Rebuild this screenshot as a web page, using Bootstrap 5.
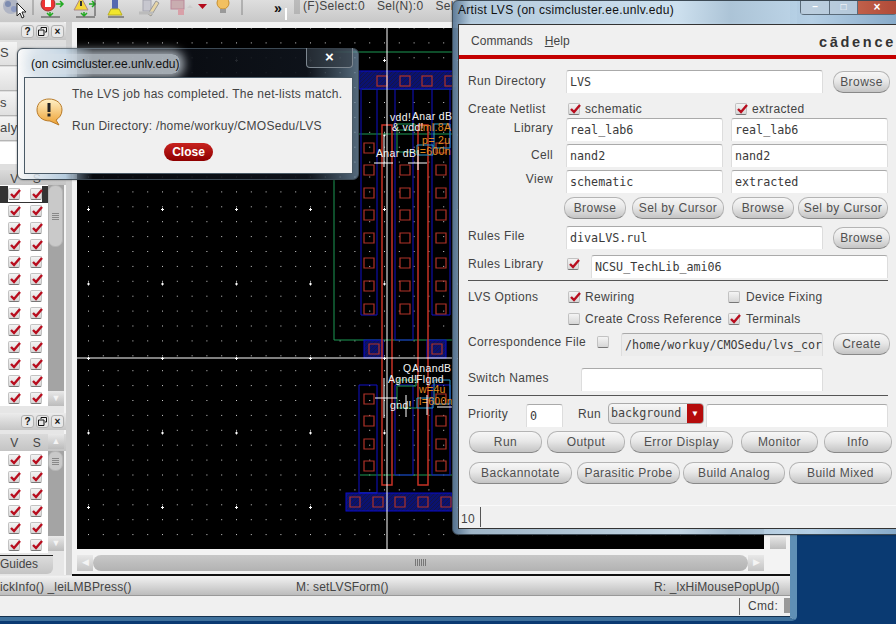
<!DOCTYPE html>
<html lang="en">
<head>
<meta charset="UTF-8">
<title>Artist LVS</title>
<link rel="stylesheet" href="https://cdn.jsdelivr.net/npm/bootstrap@5.3.0/dist/css/bootstrap.min.css">
<style>
html, body { margin: 0; height: 624px; overflow: hidden; }
body { background: #0a3a72; font-family: "Liberation Sans", Arial, sans-serif; font-size: 12px; color: #444; letter-spacing: .35px; }
.desk { position: relative; width: 896px; height: 624px; overflow: hidden; }

/* big layout window */
.main-win { position: absolute; left: 0; top: 0; z-index: 0; width: 797px; height: 621px; background: #e9e9e9; border-right: 7px solid #5f8fb5; border-bottom: 4px solid #3f719c; border-bottom-right-radius: 5px; }
.tool-strip { height: 22px; background: linear-gradient(#dedede, #c8c8c8); position: relative; overflow: hidden; z-index: 1; }
.tool-more { position: absolute; left: 274px; top: -2px; font-size: 14px; font-weight: 700; color: #111; }
.sel-text { position: absolute; left: 303px; top: -3px; font-size: 12px; letter-spacing: .3px; display: flex; gap: 12px; white-space: nowrap; }
.work { position: absolute; left: 0; top: 20px; width: 790px; height: 555px; background: linear-gradient(90deg, #e6e6e6 64px, #f4f4f4 64px 66px, #cfcfcf 66px 72px, #f3f3f3 72px); }
.dock-col { position: absolute; left: 0; top: 0; width: 66px; }
.dock-head { height: 17px; background: linear-gradient(#ececec, #c6c6c6); display: flex; justify-content: flex-end; gap: 2px; padding: 2px 2px 0 0; }
.dock-btn { width: 13px; height: 13px; background: #e8e8e8; border: 1px solid #b0b0b0; border-radius: 3px; font-size: 10px; line-height: 11px; text-align: center; font-weight: 700; color: #111; letter-spacing: 0; }
.dock-btn svg { display: block; margin: 1px 0 0 1px; }
.gap-3px { height: 3px; }
.gap-4px { height: 4px; }
.gap-7px { height: 7px; }
.side-stack { height: 130px; position: relative; background: #dfdfdf; }
.side-tab { position: absolute; left: 0; width: 17px; height: 24px; background: linear-gradient(#f4f4f4, #e0e0e0); border-bottom: 1px solid #b5b5b5; font-size: 13px; line-height: 22px; overflow: hidden; white-space: nowrap; text-align: right; }
.tab-1 { top: 2px; padding-right: 9px; }
.tab-2 { top: 27px; }
.tab-3 { top: 52px; padding-right: 13px; }
.tab-4 { top: 77px; padding-right: 6px; }
.side-blank { position: absolute; left: 0; top: 102px; width: 17px; height: 22px; background: #fff; }
.col-heads { height: 15px; background: linear-gradient(#dadada, #c4c4c4); }
.col-heads-tall { height: 17px; }
.head-vs { width: 48px; display: flex; justify-content: flex-end; gap: 14px; padding-right: 7px; }
.chk-rows { width: 48px; background: #fff; display: flex; flex-direction: column; align-items: flex-end; padding-right: 6px; }
.chk-pair { height: 17px; display: flex; gap: 10px; align-items: center; }
#list1 .chk-pair:first-child { box-shadow: -8px 1px 0 #333, 6px 1px 0 #333; }
.v-track { width: 16px; background: #a4a4a4; display: flex; flex-direction: column; justify-content: space-between; }
.track-long { height: 221px; }
.track-short { height: 100px; }
.thumb-v { background: #c9c9c9; border: 1px solid #b5b5b5; border-radius: 7px; width: 15px; display: flex; align-items: center; justify-content: center; }
.thumb-v i { display: block; width: 7px; height: 7px; background: repeating-linear-gradient(#888 0 1px, transparent 1px 2px); }
.thumb-long { height: 62px; }
.thumb-short { height: 20px; }
.sb-arrow { height: 15px; width: 16px; background: linear-gradient(#e9e9e9, #bcbcbc); color: #f4f4f4; text-align: center; font-size: 9px; line-height: 15px; letter-spacing: 0; }
.guides-tab { position: absolute; left: 0; top: 535px; width: 53px; height: 19px; background: linear-gradient(#dcdcdc, #c4c4c4); border-top: 1px solid #222; border-radius: 0 0 6px 0; font-size: 12px; line-height: 16px; letter-spacing: 0; }

.canvas-box { position: absolute; left: 77px; top: 28px; width: 687px; height: 521px; background: #000; }
.canvas-box svg { display: block; }
.corner-btn { position: absolute; left: 770px; top: 537px; width: 16px; height: 12px; background: linear-gradient(#e4e4e4, #bdbdbd); }
.h-scroll { position: absolute; left: 77px; top: 555px; width: 687px; height: 16px; display: flex; }
.h-btn { width: 16px; background: linear-gradient(#e8e8e8, #c4c4c4); color: #f4f4f4; text-align: center; font-size: 9px; line-height: 15px; letter-spacing: 0; }
.h-thumb { flex: 1; background: linear-gradient(#c8c8c8, #b2b2b2); border-radius: 8px; position: relative; }
.h-grip { position: absolute; left: 322px; top: 4px; width: 11px; height: 7px; background: repeating-linear-gradient(90deg, #777 0 1px, transparent 1px 2px); }
.black-rule { position: absolute; left: 72px; top: 574px; width: 718px; height: 2px; background: #111; }
.status-a { position: absolute; left: 0; top: 576px; width: 790px; height: 20px; background: linear-gradient(#f3f3f3, #bcbcbc); border-bottom: 1px solid #999; letter-spacing: .15px; }
.status-a span { position: absolute; top: 2px; white-space: nowrap; }
.st-l { left: 0; }
.st-m { left: 296px; }
.st-r { left: 654px; }
.status-b { position: absolute; left: 0; top: 596px; width: 790px; height: 21px; background: #f0f0f0; display: flex; align-items: center; justify-content: flex-end; border-bottom: 1px solid #14304e; }
.cmd-cell { width: 51px; height: 17px; border-left: 1px solid #666; padding-left: 8px; line-height: 16px; display: flex; justify-content: space-between; }
.cmd-cell i { display: block; width: 6px; height: 15px; background: #999; }

/* glass windows */
.glass { position: absolute; background: linear-gradient(90deg, rgba(255,255,255,.85), rgba(170,200,225,.75) 14%, rgba(8,10,15,.88) 22%, rgba(15,20,28,.92) 85%, rgba(120,150,175,.7)); border: 1px solid #3d4a55; border-radius: 6px; box-shadow: 0 0 2px rgba(0,0,0,.5); }
.msg-box { left: 17px; top: 48px; width: 342px; height: 132px; }
.msg-title { position: absolute; left: 13px; top: 5px; height: 20px; line-height: 20px; color: #111; letter-spacing: 0; background: rgba(215,224,232,.75); box-shadow: 0 0 10px 4px rgba(215,224,232,.75); border-radius: 8px; }
.msg-close { position: absolute; right: 5px; top: -1px; width: 47px; height: 20px; border: 1px solid #7d8790; border-top: 0; border-radius: 0 0 4px 4px; background: rgba(50,58,66,.6); color: #fff; text-align: center; font-weight: 700; font-size: 15px; line-height: 18px; letter-spacing: 0; }
.msg-body { position: absolute; left: 6px; top: 28px; width: 329px; height: 97px; background: #f0f0f0; border: 1px solid #4a5a66; display: flex; flex-direction: column; align-items: center; }
.msg-row { display: flex; width: 100%; padding-left: 11px; gap: 8px; align-items: flex-start; height: 65px; letter-spacing: .27px; }
.msg-row p { margin: 0; line-height: 32px; white-space: nowrap; }
.msg-ico { margin-top: 20px; flex: none; }
.red-pill { background: linear-gradient(#c8221f, #8e0000); color: #fff; font-weight: 700; border: 0; border-radius: 9px; padding: 0; width: 49px; height: 18px; font-size: 12px; line-height: 17px; letter-spacing: 0; }

.lvs-win { left: 452px; top: 0; width: 450px; height: 535px; background: linear-gradient(90deg, rgba(90,120,150,.95), rgba(175,200,220,.9) 4%, rgba(205,225,240,.95) 50%, rgba(170,195,215,.95) 62%, rgba(190,215,235,.95) 80%, rgba(140,175,205,.95)); border-radius: 6px 0 0 6px; }
.lvs-title { position: absolute; left: 5px; top: -1px; height: 20px; line-height: 20px; color: #111; letter-spacing: .3px; }
.win-ctrls { position: absolute; left: 347px; top: 0; height: 14px; display: flex; border: 1px solid #5a6b7a; border-top: 0; border-radius: 0 0 4px 4px; }
.win-ctrls b { display: block; height: 13px; color: #fff; text-align: center; font-size: 10px; line-height: 12px; background: rgba(190,205,220,.7); border-right: 1px solid #5a6b7a; letter-spacing: 0; }
.wc-min { width: 29px; }
.wc-max { width: 28px; }
.win-ctrls b.wc-x { width: 38px; background: linear-gradient(90deg, #c0604a, #b04a38); border: 0; font-size: 12px; }
.lvs-body { position: absolute; left: 5px; top: 23px; right: 0; height: 505px; background: #f0f0f0; border: 1px solid #333; border-right: 0; }
.lvs-menu { height: 30px; display: flex; align-items: center; padding: 1px 0 0 12px; gap: 12px; position: relative; letter-spacing: .05px; }
.brand { position: absolute; left: 360px; top: 7px; font-size: 14.500px; font-weight: 700; color: #333; letter-spacing: 2.700px; line-height: 20px; }
.red-rule { height: 4px; background: #c40000; }

.form-pane { padding: 0 0 0 9px; width: 437px; }
.f-row { display: flex; align-items: flex-start; position: relative; }
.lbl { white-space: nowrap; }
.lbl-r { width: 85px; text-align: right; }
.lbl-up { margin-top: -3px; }
.inp.form-control { background: #fff; border: 1px solid #aaa; border-bottom: 0; border-right-color: #ddd; border-left-color: #ddd; border-radius: 3px 3px 0 0; height: 23px; min-height: 0; font-family: "DejaVu Sans Mono", monospace; font-size: 11.700px; letter-spacing: 0; padding: 0 0 1px 3px; color: #3a3a3a; box-shadow: none; }
.inp.inp-off { background: #ececec; }
.pill.btn { height: 22px; background: linear-gradient(#f7f7f7, #e8e8e8 45%, #c4c4c4); border: 1px solid #b4b4b4; border-bottom-color: #888; border-radius: 10px; color: #505050; font-size: 12px; letter-spacing: .45px; padding: 0; line-height: 20px; text-align: center; white-space: nowrap; }
.tick { width: 12px; height: 12px; background: linear-gradient(#f4f4f4, #d6d6d6); border: 1px solid #c2c2c2; border-bottom-color: #777; border-radius: 2px; display: block; flex: none; }
.tick svg { display: block; margin: -1px 0 0 0; }
.hr-dark { height: 1px; background: #555; width: 420px; }
.bottom-cnt { position: absolute; left: 0; right: 0; bottom: 0; height: 23px; border-top: 1px solid #fafafa; display: flex; }
.bottom-cnt span { width: 22px; padding: 3px 0 0 2px; border-right: 1px solid #555; margin: 1px 0; }
.sel-box { display: flex; width: 96px; height: 21px; margin-top: -1px; border: 1px solid #aaa; border-radius: 4px; background: linear-gradient(#f6f6f6, #dadada); overflow: hidden; font-family: "DejaVu Sans Mono", monospace; font-size: 11.700px; letter-spacing: 0; }
.sel-box span { flex: 1; padding-left: 2px; line-height: 18px; }
.sel-box em { display: block; width: 16px; background: #b50c0c; color: #fff; font-style: normal; text-align: center; font-size: 8px; line-height: 20px; }

/* form rows */
.row-run { margin-top: 11px; }
.row-create { margin-top: 10px; height: 15px; }
.row-cell { margin-top: 3px; }
.row-btns { margin-top: 4px; padding-left: 96px; gap: 6px; }
.row-rules { margin-top: 7px; }
.row-lib { margin-top: 6px; }
.hr-a { margin-top: 2px; }
.row-opt { margin-top: 10px; height: 16px; }
.row-opt2 { margin-top: 6px; height: 16px; }
.row-corr { margin-top: 4px; }
.row-switch { margin-top: 12px; }
.hr-b { margin-top: 4px; }
.row-prio { margin-top: 8px; }
.row-acts { margin-top: 4px; padding-left: 1px; }
.row-acts2 { margin-top: 9px; padding-left: 1px; }
.w-37 { width: 37px; } .w-45 { width: 45px; } .w-57 { width: 57px; } .w-58 { width: 58px; }
.w-62 { width: 62px; } .w-68 { width: 68px; } .w-73 { width: 73px; } .w-77 { width: 77px; }
.w-78 { width: 78px; } .w-90 { width: 90px; } .w-92 { width: 92px; } .w-98 { width: 98px; } .w-99 { width: 99px; }
.w-100px { width: 100px; } .w-102 { width: 102px; } .w-103 { width: 103px; } .w-113 { width: 113px; } .w-129 { width: 129px; }
.w-148 { width: 148px; } .w-155 { width: 155px; } .w-157 { width: 157px; } .w-182 { width: 182px; }
.w-202 { width: 202px; } .w-242 { width: 242px; } .w-257 { width: 257px; } .w-297 { width: 297px; }
.ml-2px { margin-left: 2px; } .ml-3px { margin-left: 3px; } .ml-4px { margin-left: 4px; } .ml-5px { margin-left: 5px; }
.ml-6px { margin-left: 6px; } .ml-8px { margin-left: 8px; } .ml-10px { margin-left: 10px; } .ml-12px { margin-left: 12px; } .ml-13px { margin-left: 13px; }
.ml-neg2 { margin-left: -2px; }
.pl-5px { padding-left: 5px; } .pl-6px { padding-left: 6px; }
.pt-1px { padding-top: 1px; } .pt-2px { padding-top: 2px; } .pt-3px { padding-top: 3px; }
.mt-1px { margin-top: 1px; } .mt-2px { margin-top: 2px; } .mt-3px { margin-top: 3px; }
.run-lbl { width: 45px; padding: 1px 0 0 15px; }
</style>
</head>
<body>
<div class="desk">

  <div class="main-win">
    <div class="tool-strip">
      <svg width="300" height="22" viewBox="0 0 300 22">
        <circle cx="11" cy="6" r="8" fill="#b0b5c4"/><circle cx="8" cy="4" r="3" fill="#7d8cb0"/><circle cx="14" cy="9" r="3" fill="#8d9ac0"/>
        <path d="M17 3l0 13 3-3 2 5 2-1-2-5 4 0z" fill="#fff" stroke="#222"/>
        <path d="M33 0v15" stroke="#888"/>
        <circle cx="48" cy="4" r="7" fill="#e33" stroke="#933"/><rect x="45" y="0" width="6" height="7" fill="#fff"/>
        <path d="M56 4h6M60 1l3 3-3 3M50 12v3M47 13l3 3 3-3" stroke="#2a2" fill="none" stroke-width="1.500"/><path d="M41 17h19" stroke="#444"/>
        <path d="M81 -3l7 13h-14z" fill="#f4d63a" stroke="#a88"/><rect x="80" y="1" width="2" height="5" fill="#333"/>
        <path d="M89 4h5M92 1l3 3-3 3M84 12v3M81 13l3 3 3-3" stroke="#2a2" fill="none" stroke-width="1.500"/><path d="M95 0v16M76 17h19" stroke="#444"/>
        <rect x="112" y="0" width="6" height="9" fill="#5468b0"/><path d="M111 9h8l3 6h-14z" fill="#f2e62c" stroke="#b9ae20"/><path d="M108 17h16" stroke="#444"/>
        <rect x="143" y="0" width="8" height="11" fill="#c7c7cf" stroke="#a5a5b0"/><path d="M148 14l8-13 3 2-8 13z" fill="#e7d5a5" stroke="#999"/><path d="M139 13h14" stroke="#bbb" stroke-width="3"/>
        <rect x="171" y="0" width="13" height="9" fill="#c9adb0" stroke="#b89"/><rect x="178" y="9" width="6" height="6" fill="#d8a0a8"/><path d="M187 8l3-3 3 3z" fill="#ccc"/>
        <path d="M198 4h9l-4.500 5z" fill="#b40a1c"/>
        <circle cx="223" cy="3" r="6" fill="#f2c060" stroke="#c89030"/><rect x="220" y="9" width="6" height="4" fill="#999"/>
        <path d="M242 0v15" stroke="#888"/>
        <path d="M286 8v12" stroke="#fff" stroke-width="2"/>
        <path d="M295 0v14M297 0v14M299 0v14" stroke="#999"/>
      </svg>
      <span class="tool-more">&raquo;</span>
      <span class="sel-text"><span>(F)Select:0</span><span>Sel(N):0</span><span>Sel</span></span>
    </div>

    <div class="work">
      <div class="dock-col">
        <div class="gap-3px"></div>
        <div class="dock-head"><span class="dock-btn">?</span><span class="dock-btn"><svg width="9" height="9" viewBox="0 0 9 9"><path d="M3 2V.5h5.500V5H7M.5 3h5.500v5.500H.5z" fill="none" stroke="#111"/></svg></span><span class="dock-btn">&times;</span></div>
        <div class="side-stack">
          <span class="side-tab tab-1">S</span>
          <span class="side-tab tab-2"></span>
          <span class="side-tab tab-3">s</span>
          <span class="side-tab tab-4">aly</span>
          <span class="side-blank"></span>
        </div>
        <div class="d-flex col-heads"><div class="head-vs"><span>V</span><span>S</span></div></div>
        <div class="d-flex">
          <div class="chk-rows" id="list1"></div>
          <div class="v-track track-long">
            <div class="thumb-v thumb-long"><i></i></div>
            <div class="sb-arrow">&#9660;</div>
          </div>
        </div>
        <div class="gap-7px"></div>
        <div class="dock-head"><span class="dock-btn">?</span><span class="dock-btn"><svg width="9" height="9" viewBox="0 0 9 9"><path d="M3 2V.5h5.500V5H7M.5 3h5.500v5.500H.5z" fill="none" stroke="#111"/></svg></span><span class="dock-btn">&times;</span></div>
        <div class="gap-4px"></div>
        <div class="d-flex col-heads col-heads-tall">
          <div class="head-vs"><span>V</span><span>S</span></div>
          <div class="sb-arrow">&#9650;</div>
        </div>
        <div class="d-flex">
          <div class="chk-rows" id="list2"></div>
          <div class="v-track track-short">
            <div class="thumb-v thumb-short"><i></i></div>
            <div class="sb-arrow">&#9660;</div>
          </div>
        </div>
      </div>
      <div class="guides-tab">Guides</div>
    </div>

    <div class="canvas-box">
      <svg width="687" height="521" viewBox="77 28 687 521" font-family="Liberation Sans" font-size="10.500">
        <defs>
          <pattern id="dotGrid" x="88" y="27.500" width="14.800" height="14.900" patternUnits="userSpaceOnUse"><rect width="1" height="1" fill="#cfcfcf"/></pattern>
          <pattern id="bigGrid" x="87" y="59" width="74" height="74.500" patternUnits="userSpaceOnUse"><path d="M1.500 0v3M0 1.500h3" stroke="#fff"/></pattern>
          <pattern id="hatch" width="4" height="4" patternUnits="userSpaceOnUse"><rect width="4" height="4" fill="#0a1270"/><path d="M0 4L4 0" stroke="#141448"/></pattern>
        </defs>
        <rect x="77" y="28" width="687" height="521" fill="url(#dotGrid)"/>
        <rect x="77" y="28" width="687" height="521" fill="url(#bigGrid)"/>
        <g fill="none" stroke="#1c9a55">
          <path d="M334 180V340H452M334 52H452M362 89H452M358 134H452"/>
          <path d="M360 475H452M360 493H377"/>
        </g>
        <rect x="359" y="71" width="94" height="18" fill="url(#hatch)" stroke="#0a0ad0"/>
        <rect x="346" y="493" width="106" height="18" fill="url(#hatch)" stroke="#0a0ad0"/>
        <rect x="364" y="340" width="19" height="18" fill="url(#hatch)" stroke="#0a0ad0"/>
        <rect x="427" y="340" width="19" height="18" fill="url(#hatch)" stroke="#0a0ad0"/>
        <g fill="none" stroke="#1010c8">
          <path d="M361 89V315H377V89M395 89V340H413V89M432 89V315H450V89"/>
          <path d="M359 385V493H377V385ZM395 385V475H413V385ZM432 385V475H450V385Z"/>
        </g>
        <g fill="none" stroke="#b03228" stroke-width="1.200">
          <rect x="377" y="76" width="10" height="10"/><rect x="400" y="76" width="10" height="10"/><rect x="422" y="76" width="10" height="10"/><rect x="445" y="76" width="10" height="10"/>
          <path d="M364 143h10v10h-10zM364 165h10v10h-10zM364 188h10v10h-10zM364 210h10v10h-10zM364 233h10v10h-10zM364 258h10v10h-10zM364 281h10v10h-10zM364 304h10v10h-10z"/>
          <path d="M400 165h10v10h-10zM400 188h10v10h-10zM400 210h10v10h-10zM400 233h10v10h-10zM400 258h10v10h-10zM400 281h10v10h-10zM400 304h10v10h-10z"/>
          <path d="M436 143h10v10h-10zM436 165h10v10h-10zM436 188h10v10h-10zM436 210h10v10h-10zM436 233h10v10h-10zM436 258h10v10h-10zM436 281h10v10h-10zM436 304h10v10h-10z"/>
          <path d="M369 344h10v10h-10zM432 344h10v10h-10z"/>
          <path d="M364 394h10v10h-10zM364 416h10v10h-10zM364 439h10v10h-10zM364 461h10v10h-10z"/>
          <path d="M436 394h10v10h-10zM436 416h10v10h-10zM436 439h10v10h-10zM436 461h10v10h-10z"/>
          <path d="M350 497h10v10h-10zM373 497h10v10h-10zM395 497h10v10h-10zM418 497h10v10h-10zM441 497h10v10h-10z"/>
          <path d="M382 485V125H392V485ZM418 485V125H428V485Z" stroke="#c63226" stroke-width="1.500"/>
        </g>
        <path d="M387 28V549M77 358H452" stroke="#fff"/>
        <g fill="none" stroke="#1c9a55"><path d="M397 124h18v6h-18zM397 130v22h20M398 380h18v6h-18zM397 386v22h20"/></g>
        <g fill="none" stroke="#2a9ad0"><path d="M417 145h16v10h-16zM434 124h16v24h-16zM417 398h16v10h-16zM434 380h16v24h-16z"/></g>
        <g fill="#f4f4f4">
          <text x="390" y="121">vdd!</text><text x="412" y="120">Anar dB</text>
          <text x="392" y="131">&amp; vdd!</text>
          <text x="376" y="157">Anar dB</text>
          <text x="403" y="372">Q</text><text x="412" y="372">AnandB</text>
          <text x="388" y="383">Agnd!</text><text x="416" y="383">Flgnd</text>
          <text x="390" y="409">gnd!</text>
        </g>
        <g fill="#e08a20">
          <text x="420" y="131">lml.8A</text><text x="422" y="144">p= 2u</text><text x="417" y="155">l=600n</text>
          <text x="419" y="393">w=4u</text><text x="419" y="405">l=600n</text>
        </g>
        <g stroke="#fff" fill="none"><path d="M374 163h19M408 163h19M384 135v32M418 150v20M375 398h22M384 378v40M406 395v22M427 395v20M437 407h15"/></g>
      </svg>
    </div>
    <div class="corner-btn"></div>
    <div class="h-scroll">
      <div class="h-btn">&#9664;</div>
      <div class="h-thumb"><div class="h-grip"></div></div>
      <div class="h-btn">&#9654;</div>
    </div>
    <div class="black-rule"></div>
    <div class="status-a">
      <span class="st-l">ickInfo() _leiLMBPress()</span>
      <span class="st-m">M: setLVSForm()</span>
      <span class="st-r">R: _lxHiMousePopUp()</span>
    </div>
    <div class="status-b"><div class="cmd-cell"><span>Cmd:</span><i></i></div></div>
  </div>

  <!-- LVS done message -->
  <div class="glass msg-box">
    <div class="msg-title">(on csimcluster.ee.unlv.edu)</div>
    <div class="msg-close">&times;</div>
    <div class="msg-body">
      <div class="msg-row">
        <svg width="28" height="28" viewBox="0 0 28 28" class="msg-ico">
          <defs><linearGradient id="bub" x1="0" y1="0" x2="0" y2="1"><stop offset="0" stop-color="#fff1c8"/><stop offset="1" stop-color="#eea030"/></linearGradient></defs>
          <path d="M13 1c7 0 13 4 13 11 0 5-3 8-6 10l3 5-9-4C6 23 1 18 1 12 1 5 6 1 13 1z" fill="url(#bub)" stroke="#b87a28"/>
          <rect x="11.500" y="5" width="3" height="9" fill="#222"/><rect x="11.500" y="15.500" width="3" height="3" fill="#222"/>
        </svg>
        <div>
          <p>The LVS job has completed. The net-lists match.</p>
          <p>Run Directory: /home/workuy/CMOSedu/LVS</p>
        </div>
      </div>
      <button class="red-pill" type="button">Close</button>
    </div>
  </div>

  <!-- Artist LVS form -->
  <div class="glass lvs-win">
    <div class="lvs-title">Artist LVS (on csimcluster.ee.unlv.edu)</div>
    <div class="win-ctrls"><b class="wc-min">&#8211;</b><b class="wc-max">&#9633;</b><b class="wc-x">&times;</b></div>
    <div class="lvs-body">
      <div class="lvs-menu"><span>Commands</span><span><u>H</u>elp</span><span class="brand">cādence</span></div>
      <div class="red-rule"></div>
      <div class="form-pane">

        <div class="f-row row-run">
          <span class="lbl w-98 pt-2px">Run Directory</span>
          <input class="form-control inp w-257" value="LVS">
          <button class="btn pill w-57 ml-10px mt-1px" type="button">Browse</button>
        </div>

        <div class="f-row row-create">
          <span class="lbl w-100px lbl-up">Create Netlist</span>
          <span class="tick" data-on="1"></span><span class="lbl w-155 pl-5px lbl-up">schematic</span>
          <span class="tick" data-on="1"></span><span class="lbl pl-5px lbl-up">extracted</span>
        </div>

        <div class="f-row">
          <span class="lbl lbl-r pt-1px">Library</span>
          <input class="form-control inp w-157 ml-13px" value="real_lab6">
          <input class="form-control inp w-157 ml-8px" value="real_lab6">
        </div>
        <div class="f-row row-cell">
          <span class="lbl lbl-r pt-2px">Cell</span>
          <input class="form-control inp w-157 ml-13px" value="nand2">
          <input class="form-control inp w-157 ml-8px" value="nand2">
        </div>
        <div class="f-row row-cell">
          <span class="lbl lbl-r">View</span>
          <input class="form-control inp w-157 ml-13px" value="schematic">
          <input class="form-control inp w-157 ml-8px" value="extracted">
        </div>

        <div class="f-row row-btns">
          <button class="btn pill w-62" type="button">Browse</button>
          <button class="btn pill w-92" type="button">Sel by Cursor</button>
          <button class="btn pill w-62 ml-2px" type="button">Browse</button>
          <button class="btn pill w-90 ml-neg2" type="button">Sel by Cursor</button>
        </div>

        <div class="f-row row-rules">
          <span class="lbl w-98 pt-1px">Rules File</span>
          <input class="form-control inp w-257" value="divaLVS.rul">
          <button class="btn pill w-57 ml-10px mt-1px" type="button">Browse</button>
        </div>

        <div class="f-row row-lib">
          <span class="lbl w-99">Rules Library</span>
          <span class="tick mt-3px" data-on="1"></span>
          <input class="form-control inp w-297 ml-12px" value="NCSU_TechLib_ami06">
        </div>

        <div class="hr-dark hr-a"></div>

        <div class="f-row row-opt">
          <span class="lbl w-100px lbl-up">LVS Options</span>
          <span class="tick" data-on="1"></span><span class="lbl w-148 pl-5px lbl-up">Rewiring</span>
          <span class="tick"></span><span class="lbl pl-6px lbl-up">Device Fixing</span>
        </div>
        <div class="f-row row-opt2">
          <span class="lbl w-100px"></span>
          <span class="tick"></span><span class="lbl w-148 pl-5px lbl-up">Create Cross Reference</span>
          <span class="tick" data-on="1"></span><span class="lbl pl-6px lbl-up">Terminals</span>
        </div>

        <div class="f-row row-corr">
          <span class="lbl w-129">Correspondence File</span>
          <span class="tick mt-3px"></span>
          <input class="form-control inp inp-off w-202 ml-12px" value="/home/workuy/CMOSedu/lvs_cor">
          <button class="btn pill w-57 ml-10px" type="button">Create</button>
        </div>

        <div class="f-row row-switch">
          <span class="lbl w-113 pt-1px">Switch Names</span>
          <input class="form-control inp w-242">
        </div>

        <div class="hr-dark hr-b"></div>

        <div class="f-row row-prio">
          <span class="lbl w-58 pt-1px">Priority</span>
          <input class="form-control inp w-37" value="0">
          <span class="lbl run-lbl">Run</span>
          <div class="sel-box"><span>background</span><em>&#9660;</em></div>
          <input class="form-control inp w-182 ml-2px">
        </div>

        <div class="f-row row-acts">
          <button class="btn pill w-73" type="button">Run</button>
          <button class="btn pill w-78 ml-5px" type="button">Output</button>
          <button class="btn pill w-103 ml-5px" type="button">Error Display</button>
          <button class="btn pill w-77 ml-8px" type="button">Monitor</button>
          <button class="btn pill w-68 ml-6px" type="button">Info</button>
        </div>
        <div class="f-row row-acts2">
          <button class="btn pill w-103" type="button">Backannotate</button>
          <button class="btn pill w-103 ml-5px" type="button">Parasitic Probe</button>
          <button class="btn pill w-102 ml-3px" type="button">Build Analog</button>
          <button class="btn pill w-103 ml-4px" type="button">Build Mixed</button>
        </div>
      </div>
      <div class="bottom-cnt"><span>10</span></div>
    </div>
  </div>

</div>

<script src="https://cdn.jsdelivr.net/npm/bootstrap@5.3.0/dist/js/bootstrap.bundle.min.js"></script>
<script>
  var tickSvg = '<svg width="12" height="12" viewBox="0 0 12 12"><path d="M2 6l3 3 6-7" fill="none" stroke="#b80d1e" stroke-width="2.400"/></svg>';
  document.querySelectorAll('.tick[data-on]').forEach(function (t) { t.innerHTML = tickSvg; });

  function fillChecks(id, n) {
    var html = '';
    for (var i = 0; i < n; i++) {
      html += '<div class="chk-pair"><span class="tick">' + tickSvg + '</span><span class="tick">' + tickSvg + '</span></div>';
    }
    document.getElementById(id).innerHTML = html;
  }
  fillChecks('list1', 13);
  fillChecks('list2', 6);
</script>
</body>
</html>
